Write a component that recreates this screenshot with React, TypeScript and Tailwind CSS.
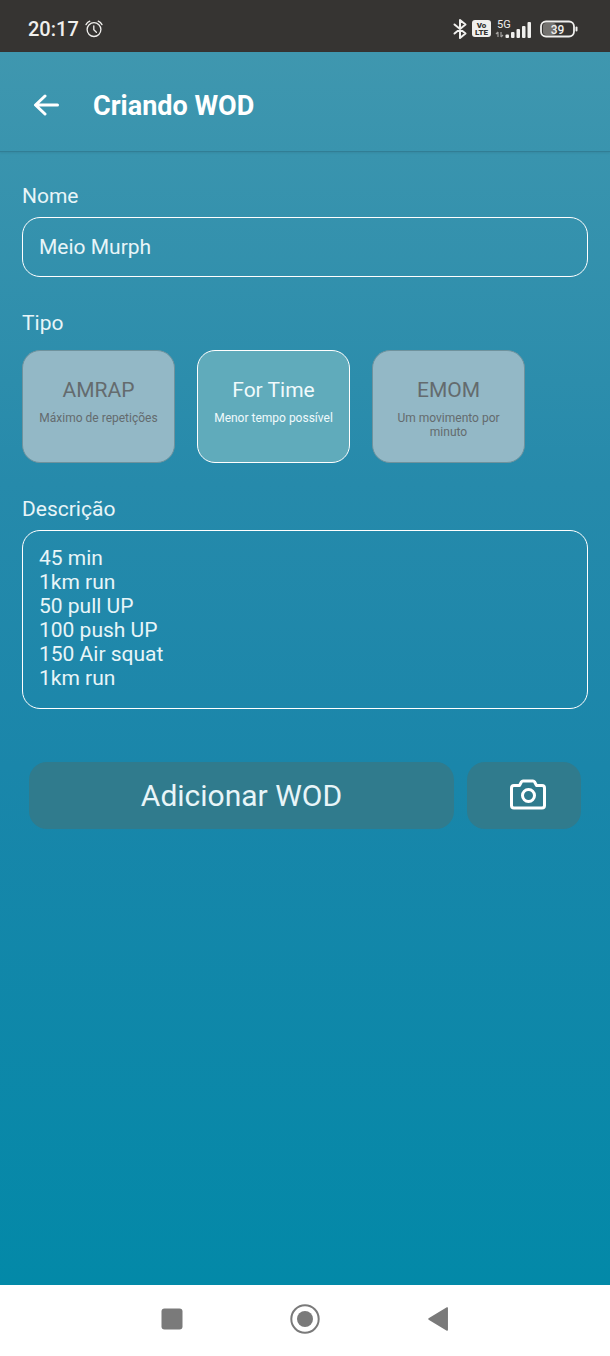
import { useState } from "react";

interface WodType {
  id: string;
  title: string;
  description: string;
}

const wodTypes: WodType[] = [
  { id: "amrap", title: "AMRAP", description: "Máximo de repetições" },
  { id: "for-time", title: "For Time", description: "Menor tempo possível" },
  { id: "emom", title: "EMOM", description: "Um movimento por minuto" },
];

const initialDescription = [
  "45 min",
  "1km run",
  "50 pull UP",
  "100 push UP",
  "150 Air squat",
  "1km run",
].join("\n");

function StatusBar() {
  return (
    <div className="flex h-[52px] shrink-0 items-center justify-between bg-[#363432] pt-[5px] pr-8 pl-7 text-[#f0efed]">
      <div className="flex items-center gap-[6px]">
        <span className="text-[20px] leading-6 font-medium">20:17</span>
        <svg className="h-[18px] w-[18px]" viewBox="0 0 18 18" fill="none" stroke="currentColor" strokeWidth="1.3" strokeLinecap="round">
          <circle cx="9" cy="9.6" r="6.9" />
          <path d="M8.8 5.8v4l2.6 2.4M1 4.6Q2.2 2.2 4.8 1.2M17 4.6Q15.8 2.2 13.2 1.2" />
        </svg>
      </div>

      <div className="flex items-center gap-1">
        <svg className="h-[22px] w-[16px]" viewBox="0 0 16 22" fill="none" stroke="currentColor" strokeWidth="2" strokeLinejoin="round" strokeLinecap="round">
          <path d="M2.5 6.5l11 9-5.500 4.500V2l5.500 4.500-11 9" />
        </svg>
        <div className="flex h-[17px] w-[19px] flex-col items-center justify-center rounded-[3px] bg-[#f0efed] text-[8px] leading-[7px] font-black text-[#363432]">
          <span>Vo</span>
          <span>LTE</span>
        </div>
        {/* Mobile signal: network label over the data arrows, then the bars */}
        <svg className="h-[20px] w-[37px]" viewBox="0 0 37 20" fill="currentColor">
          <text x="2" y="9" fontSize="11" fontFamily="Roboto, sans-serif">5G</text>
          <path d="M3 18v-5M1 15l2-2M6 13v5M6 18l2-2" stroke="#a3a19f" strokeWidth="1.2" fill="none" />
          <rect x="10.500" y="15.5" width="3.500" height="3.5" rx="1" />
          <rect x="16" y="13" width="3.500" height="6" rx="1" />
          <rect x="21.500" y="10" width="3.500" height="9" rx="1" />
          <rect x="27" y="7" width="3.500" height="12" rx="1" />
          <rect x="32.500" y="3" width="3.500" height="16" rx="1" />
        </svg>
        <svg className="ml-1 h-[18px] w-[38px]" viewBox="0 0 38 18" fill="none">
          <rect x="3" y="3" width="13" height="12" rx="3" fill="#74726f" />
          <rect x="1" y="1.5" width="33" height="15" rx="5" stroke="currentColor" strokeWidth="1.8" />
          <rect x="35.5" y="6.5" width="2" height="5" rx="1" fill="currentColor" />
          <text x="17.5" y="13.5" textAnchor="middle" fontSize="12" fontWeight="500" fontFamily="Roboto, sans-serif" fill="currentColor">39</text>
        </svg>
      </div>
    </div>
  );
}

function Header() {
  return (
    <header className="flex h-[100px] shrink-0 items-center gap-8 border-b border-[#317e95] px-8 pt-2 shadow-[0_1px_2px_rgba(0,0,0,0.08)]">
      <button type="button" aria-label="Voltar">
        <svg className="h-[24px] w-[29px]" viewBox="0 0 29 24" fill="none" stroke="currentColor" strokeWidth="3" strokeLinecap="round" strokeLinejoin="round">
          <path d="M25.5 11H4M13 2L3.5 11 13 20" />
        </svg>
      </button>
      <h1 className="text-[27px] leading-8 font-bold">Criando WOD</h1>
    </header>
  );
}

function TypeCard({ type, checked, onSelect }: { type: WodType; checked: boolean; onSelect: () => void }) {
  return (
    <label
      className={
        checked
          ? "relative flex h-[113px] w-[153px] cursor-pointer flex-col items-center rounded-[18px] border border-white bg-[#60abbb] px-2 pt-[25px] text-center text-[#f0fafc]"
          : "relative flex h-[113px] w-[153px] cursor-pointer flex-col items-center rounded-[18px] border border-[#6f929d] bg-[#93b8c6] px-2 pt-[25px] text-center text-[#646b6e]"
      }
    >
      <input type="radio" name="tipo" value={type.id} checked={checked} onChange={onSelect} className="sr-only" />
      <span className="text-[21px] leading-7">{type.title}</span>
      <span className="mt-[7px] text-[12px] leading-[14px]">{type.description}</span>
    </label>
  );
}

function NavigationBar() {
  return (
    <nav className="flex h-[71px] shrink-0 items-center justify-center gap-[103px] bg-white pb-1 text-[#7a7a7a]">
      <button type="button" aria-label="Recentes">
        <svg className="h-[30px] w-[30px]" viewBox="0 0 30 30" fill="currentColor">
          <rect x="4.5" y="4.5" width="21" height="21" rx="3" />
        </svg>
      </button>
      <button type="button" aria-label="Início">
        <svg className="h-[30px] w-[30px]" viewBox="0 0 30 30" fill="currentColor">
          <circle cx="15" cy="15" r="13.7" fill="none" stroke="currentColor" strokeWidth="2" />
          <circle cx="15" cy="15" r="8" />
        </svg>
      </button>
      <button type="button" aria-label="Voltar ao anterior">
        <svg className="h-[30px] w-[30px]" viewBox="0 0 30 30" fill="currentColor" stroke="currentColor" strokeWidth="1.5" strokeLinejoin="round">
          <path d="M24.2 4v22L6 15z" />
        </svg>
      </button>
    </nav>
  );
}

export default function App() {
  const [name, setName] = useState("Meio Murph");
  const [selectedType, setSelectedType] = useState("for-time");
  const [description, setDescription] = useState(initialDescription);

  return (
    <div className="flex min-h-screen flex-col font-[Roboto,sans-serif]">
      <StatusBar />

      <div className="flex grow flex-col bg-linear-[180deg,#3f97af_0%,#268aab_35%,#1a86aa_58%,#0389a8_100%] text-white">
        <Header />

        <form className="flex flex-col px-[22px] pt-[30px] text-[21px] text-[#e8f5f8]" onSubmit={(e) => e.preventDefault()}>
          <label htmlFor="nome" className="leading-7">Nome</label>
          <input
            id="nome"
            type="text"
            value={name}
            onChange={(e) => setName(e.target.value)}
            className="mt-[7px] h-[60px] w-full rounded-[18px] border border-white px-4 outline-none"
          />

          <fieldset className="mt-8">
            <legend className="leading-7">Tipo</legend>
            <div className="mt-[13px] flex flex-wrap gap-[22px]">
              {wodTypes.map((type) => (
                <TypeCard
                  key={type.id}
                  type={type}
                  checked={selectedType === type.id}
                  onSelect={() => setSelectedType(type.id)}
                />
              ))}
            </div>
          </fieldset>

          <label htmlFor="descricao" className="mt-8 leading-7">Descrição</label>
          <textarea
            id="descricao"
            rows={6}
            value={description}
            onChange={(e) => setDescription(e.target.value)}
            className="mt-[7px] w-full resize-none rounded-[18px] border border-white px-4 pt-[15px] pb-[18px] leading-6 outline-none"
          />

          <div className="mt-[53px] flex gap-[13px] px-[7px]">
            <button type="submit" className="h-[67px] grow rounded-[18px] bg-[#307b8d] text-[30px]">
              Adicionar WOD
            </button>
            <button type="button" aria-label="Adicionar foto" className="flex h-[67px] w-[114px] items-center justify-center rounded-[18px] bg-[#307b8d] pl-2 text-white">
              <svg className="h-[36px] w-[40px]" viewBox="0 0 40 36" fill="none" stroke="currentColor" strokeWidth="3" strokeLinejoin="round">
                <path d="M6 7.500H11.500L13.500 3.800Q14 3 15 3H25Q26 3 26.500 3.800L28.500 7.500H34A2.500 2.500 0 0 1 36.500 10V27.500A2.500 2.500 0 0 1 34 30H6A2.500 2.500 0 0 1 3.500 27.500V10A2.500 2.500 0 0 1 6 7.500z" />
                <circle cx="20.500" cy="17.500" r="6" />
              </svg>
            </button>
          </div>
        </form>
      </div>

      <NavigationBar />
    </div>
  );
}
